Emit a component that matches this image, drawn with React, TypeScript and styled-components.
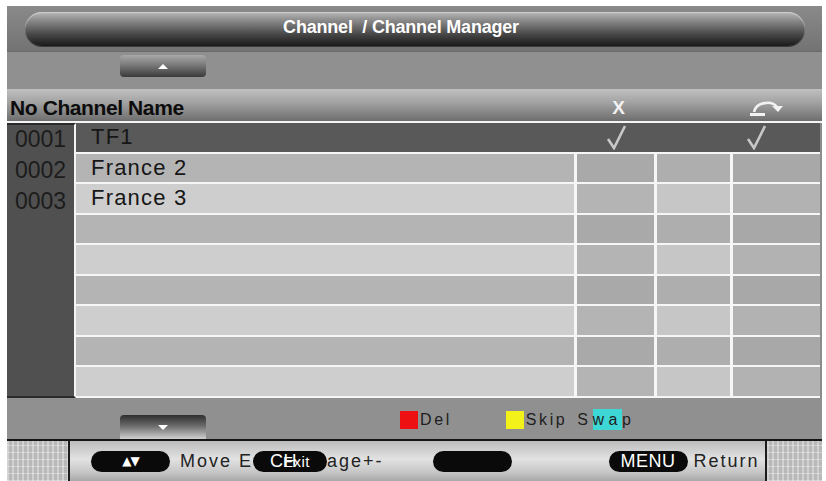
import React from 'react';
import styled, { createGlobalStyle } from 'styled-components';

const fontFamily = '"Liberation Sans", Arial, sans-serif';

const GlobalStyle = createGlobalStyle`
  body {
    margin: 0;
    background: #fff;
    font-family: ${fontFamily};
  }
`;

const Screen = styled.div`
  width: 815px;
  height: 475px;
  margin: 6px 0 0 7px;
  display: flex;
  flex-direction: column;
  background: #8c8c8c;
  overflow: hidden;
`;

const TitleArea = styled.div`
  height: 46px;
  padding: 6px 17px 6px 18px;
  box-sizing: border-box;
  background: linear-gradient(#8a8a8a, #737373);
  border-bottom: 1px solid #6a6a6a;
`;

const TitlePill = styled.div`
  height: 34px;
  border-radius: 17px;
  background: linear-gradient(#b8b8b8 0%, #8a8a8a 25%, #484848 65%, #1a1a1a 100%);
  box-shadow: 0 1px 0 #3a3a3a, inset 0 1px 1px #d0d0d0;
  display: flex;
  align-items: center;
  justify-content: center;
  padding-right: 28px;
  padding-bottom: 4px;
  box-sizing: border-box;
  color: #fff;
  font-weight: bold;
  font-size: 18px;
  letter-spacing: -0.2px;
`;

const NavArea = styled.div<{ $bottom?: boolean }>`
  height: ${p => (p.$bottom ? 41 : 37)}px;
  padding-left: 113px;
  padding-top: ${p => (p.$bottom ? 17 : 3)}px;
  box-sizing: border-box;
  background: #909090;
  display: flex;
  align-items: flex-start;
`;

const ScrollButton = styled.div<{ $down?: boolean }>`
  width: 86px;
  height: ${p => (p.$down ? 24 : 22)}px;
  border-radius: ${p => (p.$down ? '4px 4px 0 0' : '4px')};
  background: ${p =>
    p.$down
      ? 'linear-gradient(#2e2e2e, #6a6a6a 45%, #d0d0d0)'
      : 'linear-gradient(#a8a8a8, #7a7a7a 45%, #3a3a3a)'};
  display: flex;
  align-items: center;
  justify-content: center;
`;

const Arrow = styled.div<{ $down?: boolean }>`
  width: 0;
  height: 0;
  border-left: 5px solid transparent;
  border-right: 5px solid transparent;
  ${p => (p.$down ? 'border-top: 5px solid #fff;' : 'border-bottom: 5px solid #fff;')}
`;

const HeaderRow = styled.div`
  height: 34px;
  display: grid;
  grid-template-columns: 570px 77px 73px 1fr;
  column-gap: 3px;
  align-items: center;
  padding-top: 5px;
  box-sizing: border-box;
  background: linear-gradient(#c0c0c0, #a4a4a4 40%, #6e6e6e);
  border-bottom: 2px solid #f4f4f4;
`;

const HeaderTitle = styled.div`
  padding-left: 3px;
  font-weight: bold;
  font-size: 21px;
  letter-spacing: -0.4px;
  color: #0c0c0c;
`;

const HeaderMark = styled.div<{ $shift?: number }>`
  display: flex;
  justify-content: ${p => (p.$shift ? 'flex-start' : 'center')};
  padding-left: ${p => p.$shift || 0}px;
  color: #f2f2f2;
  font-weight: bold;
  font-size: 19px;
`;

const List = styled.div`
  height: 275px;
  display: flex;
`;

const NumberCol = styled.div`
  width: 69px;
  background: #505050;
  border-top: 2px solid #2a2a2a;
  border-right: 2px solid #f4f4f4;
  border-bottom: 2px solid #2a2a2a;
  padding: 1px 0 0 8px;
  box-sizing: border-box;
  display: flex;
  flex-direction: column;
  gap: 5px;
`;

const Number = styled.div`
  font-size: 23px;
  line-height: 26px;
  color: #1c1c1c;
`;

const Rows = styled.div`
  flex: 1;
  margin-right: 2px;
  padding-bottom: 2px;
  display: grid;
  grid-template-rows: repeat(9, 1fr);
  row-gap: 2px;
  background: #f6f6f6;
`;

const Row = styled.div<{ $selected?: boolean }>`
  display: grid;
  grid-template-columns: 498px 77px 73px 1fr;
  column-gap: 3px;
  background: ${p => (p.$selected ? '#595959' : '#f6f6f6')};
`;

const cellShades: Record<string, [string, string]> = {
  name: ['#b4b4b4', '#cecece'],
  del: ['#a9a9a9', '#b4b4b4'],
  skip: ['#aeaeae', '#c6c6c6'],
  swap: ['#a8a8a8', '#b2b2b2']
};

const Cell = styled.div<{ $kind: string; $light: boolean; $selected?: boolean }>`
  display: flex;
  align-items: center;
  justify-content: ${p => (p.$kind === 'del' ? 'center' : 'flex-start')};
  padding-left: ${p => (p.$kind === 'name' ? 15 : p.$kind === 'swap' ? 12 : 0)}px;
  background: ${p =>
    p.$selected ? 'transparent' : cellShades[p.$kind][p.$light ? 1 : 0]};
  font-size: 22px;
  letter-spacing: 1.2px;
  color: #161616;
  overflow: hidden;
`;

const Legend = styled.div`
  display: flex;
  align-items: center;
  margin-left: 194px;
  margin-top: -4px;
  font-size: 16px;
  letter-spacing: 2.6px;
  color: #1e1e1e;
`;

const Swatch = styled.span<{ $color: string; $gap?: number }>`
  display: inline-block;
  width: 18px;
  height: 18px;
  background: ${p => p.$color};
  margin-left: ${p => p.$gap || 0}px;
  margin-right: 2px;
`;

const SwapWord = styled.span`
  margin-left: 10px;
  letter-spacing: 4.5px;
`;

const Highlight = styled.span`
  background: #3fd6d6;
  padding: 2px 0;
`;

const Footer = styled.div`
  flex: 1;
  display: flex;
  border-top: 2px solid #151515;
  background: linear-gradient(#bcbcbc, #e2e2e2 45%, #c4c4c4 80%, #a8a8a8);
`;

const GridBox = styled.div<{ $width: number }>`
  width: ${p => p.$width}px;
  background-color: #b8b8b8;
  background-image: repeating-linear-gradient(90deg, rgba(255, 255, 255, 0.35) 0 2px, transparent 2px 5px),
    repeating-linear-gradient(0deg, rgba(255, 255, 255, 0.35) 0 1px, transparent 1px 7px);
  border-left: 2px solid #1c1c1c;
  border-right: 2px solid #1c1c1c;
  box-sizing: border-box;
`;

const FooterBar = styled.div`
  flex: 1;
  display: flex;
  align-items: center;
  padding-left: 21px;
  font-size: 18px;
  letter-spacing: 2px;
  color: #222;
`;

const Pill = styled.span<{ $width: number; $gap?: number }>`
  display: inline-flex;
  align-items: center;
  justify-content: center;
  width: ${p => p.$width}px;
  height: 21px;
  margin-left: ${p => p.$gap || 0}px;
  border-radius: 11px;
  background: #0a0a0a;
  color: #fff;
  font-size: 18px;
  letter-spacing: 0.5px;
  flex-shrink: 0;
`;

const TinyArrows = styled.span`
  font-family: "DejaVu Sans", sans-serif;
  font-size: 12px;
  letter-spacing: -1px;
`;

const Overlap = styled.span`
  margin-left: -14px;
  font-size: 15px;
`;

const FooterText = styled.span<{ $gap?: number }>`
  margin-left: ${p => p.$gap || 0}px;
`;

const Check = () => (
  <svg width="22" height="26" viewBox="0 0 22 26">
    <path d="M3 15 L9 24 L20 2" fill="none" stroke="#c8c8c8" strokeWidth="2.6" />
  </svg>
);

const SwapIcon = () => (
  <svg width="34" height="18" viewBox="0 0 34 18">
    <rect x="0" y="14" width="15" height="3" fill="#f2f2f2" />
    <path d="M4 13 C 6 3, 22 1, 27 8" fill="none" stroke="#f2f2f2" strokeWidth="2.6" />
    <polygon points="22,7 33,7 28,13" fill="#f2f2f2" />
  </svg>
);

const channels = ['TF1', 'France 2', 'France 3', '', '', '', '', '', ''];

const App: React.FC = () => (
  <>
    <GlobalStyle />
    <Screen>
      <TitleArea>
        <TitlePill>Channel&nbsp; / Channel Manager</TitlePill>
      </TitleArea>
      <NavArea>
        <ScrollButton>
          <Arrow />
        </ScrollButton>
      </NavArea>
      <HeaderRow>
        <HeaderTitle>No Channel Name</HeaderTitle>
        <HeaderMark>X</HeaderMark>
        <HeaderMark />
        <HeaderMark $shift={14}>
          <SwapIcon />
        </HeaderMark>
      </HeaderRow>
      <List>
        <NumberCol>
          <Number>0001</Number>
          <Number>0002</Number>
          <Number>0003</Number>
        </NumberCol>
        <Rows>
          {channels.map((name, i) => {
            const selected = i === 0;
            const light = i % 2 === 0;
            return (
              <Row key={i} $selected={selected}>
                <Cell $kind="name" $light={light} $selected={selected}>
                  {name}
                </Cell>
                <Cell $kind="del" $light={light} $selected={selected}>
                  {selected && <Check />}
                </Cell>
                <Cell $kind="skip" $light={light} $selected={selected} />
                <Cell $kind="swap" $light={light} $selected={selected}>
                  {selected && <Check />}
                </Cell>
              </Row>
            );
          })}
        </Rows>
      </List>
      <NavArea $bottom>
        <ScrollButton $down>
          <Arrow $down />
        </ScrollButton>
        <Legend>
          <Swatch $color="#ee1111" />
          Del
          <Swatch $color="#f2f21a" $gap={54} />
          Skip
          <SwapWord>
            S<Highlight>wa</Highlight>p
          </SwapWord>
        </Legend>
      </NavArea>
      <Footer>
        <GridBox $width={63} style={{ borderLeft: 'none' }} />
        <FooterBar>
          <Pill $width={79}>
            <TinyArrows>▲▼</TinyArrows>
          </Pill>
          <FooterText $gap={10}>Move E</FooterText>
          <Pill $width={74} $gap={0}>
            CH<Overlap>Exit</Overlap>
          </Pill>
          <FooterText>age+-</FooterText>
          <Pill $width={79} $gap={49} />
          <Pill $width={79} $gap={97}>
            MENU
          </Pill>
          <FooterText $gap={6}>Return</FooterText>
        </FooterBar>
        <GridBox $width={57} style={{ borderRight: 'none' }} />
      </Footer>
    </Screen>
  </>
);

export default App;
